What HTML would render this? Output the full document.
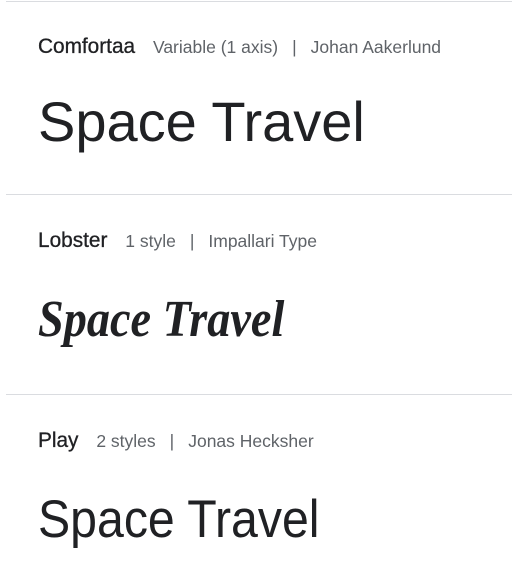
<!DOCTYPE html>
<html><head><meta charset="utf-8"><style>
body{margin:0;width:512px;height:576px;background:#fff;position:relative;overflow:hidden;font-family:"Liberation Sans",sans-serif;}
.hr{position:absolute;left:6px;right:0;height:1px;background:#dadce0;}
.h{position:absolute;left:38px;white-space:nowrap;color:#5f6368;font-size:17.5px;}
.h b{color:#202124;font-weight:normal;font-size:20.8px;margin-right:13px;-webkit-text-stroke:0.3px #202124;}
.h i{font-style:normal;margin:0 14px;}
.s{position:absolute;left:38px;white-space:nowrap;color:#202124;transform-origin:0 0;}
</style></head><body>
<div class="hr" style="top:1px"></div>
<div class="hr" style="top:194px"></div>
<div class="hr" style="top:394px"></div>

<div class="h" style="top:35px"><b>Comfortaa</b> Variable (1 axis)<i>|</i>Johan Aakerlund</div>
<div class="s" style="top:89px;font-size:56px;transform:scaleX(1.0)">Space Travel</div>

<div class="h" style="top:229px"><b>Lobster</b> 1 style<i>|</i>Impallari Type</div>
<div class="s" style="top:290px;font-family:'Liberation Serif',serif;font-weight:bold;font-style:italic;font-size:52px;transform:scaleX(0.89)">Space Travel</div>

<div class="h" style="top:429px"><b>Play</b> 2 styles<i>|</i>Jonas Hecksher</div>
<div class="s" style="top:489px;font-size:53px;transform:scaleX(0.91)">Space Travel</div>
</body></html>
